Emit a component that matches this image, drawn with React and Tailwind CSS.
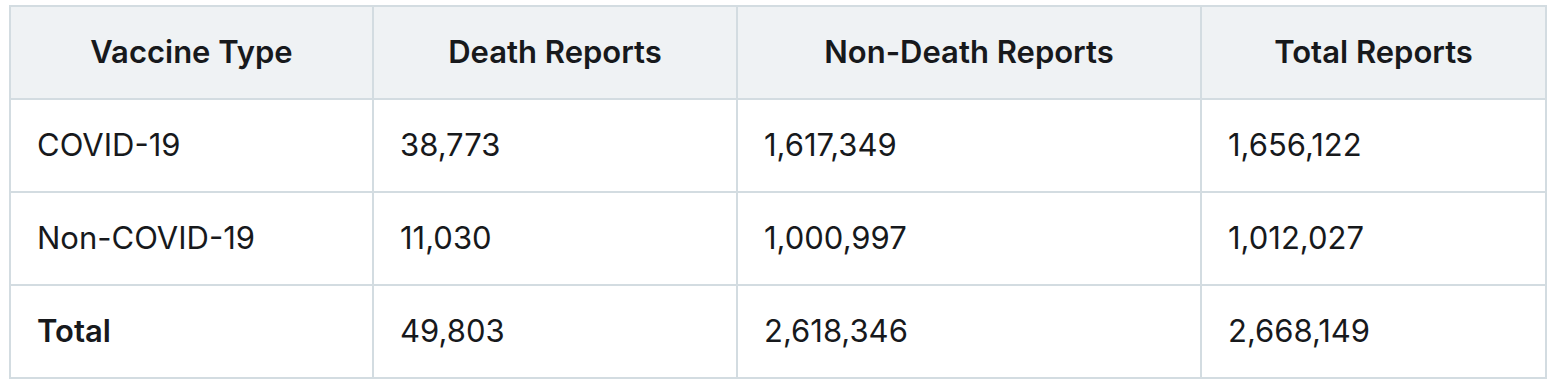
const rows = [
  { type: "COVID-19", death: "38,773", nonDeath: "1,617,349", total: "1,656,122" },
  { type: "Non-COVID-19", death: "11,030", nonDeath: "1,000,997", total: "1,012,027" },
  { type: "Total", death: "49,803", nonDeath: "2,618,346", total: "2,668,149", bold: true },
];

const headers = ["Vaccine Type", "Death Reports", "Non-Death Reports", "Total Reports"];

export default function App() {
  return (
    <div
      className="bg-white w-[1555px] h-[387px] pt-[5px] pl-[9px] text-[#17191c]"
      style={{ fontFamily: "Inter, 'Noto Sans', sans-serif" }}
    >
      <table className="table-fixed border-collapse border-2 border-[#d3dce1] w-[1536px] text-[31px]">
        <colgroup>
          <col className="w-[363px]" />
          <col className="w-[364px]" />
          <col className="w-[464px]" />
          <col className="w-[345px]" />
        </colgroup>
        <thead>
          <tr className="bg-[#eff2f4]">
            {headers.map((h) => (
              <th key={h} className="h-[93px] border-2 border-[#d3dce1] text-center font-semibold px-[26px]">
                {h}
              </th>
            ))}
          </tr>
        </thead>
        <tbody>
          {rows.map((r) => (
            <tr key={r.type}>
              <td className={`h-[93px] border-2 border-[#d3dce1] px-[26px] ${r.bold ? "font-semibold" : ""}`}>
                {r.type}
              </td>
              <td className="border-2 border-[#d3dce1] px-[26px]">{r.death}</td>
              <td className="border-2 border-[#d3dce1] px-[26px]">{r.nonDeath}</td>
              <td className="border-2 border-[#d3dce1] px-[26px]">{r.total}</td>
            </tr>
          ))}
        </tbody>
      </table>
    </div>
  );
}
